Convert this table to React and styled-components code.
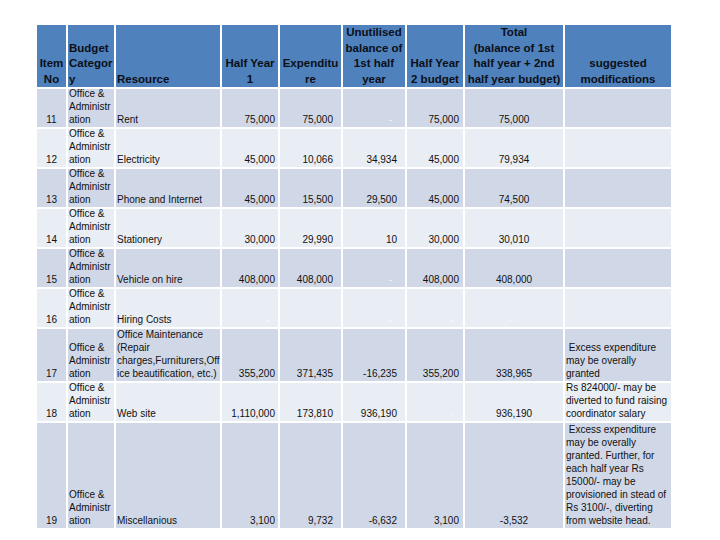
import styled, { createGlobalStyle } from "styled-components";

const GlobalStyle = createGlobalStyle`
  body {
    margin: 0;
    background: #ffffff;
    font-family: "Liberation Sans", Arial, sans-serif;
    color: #000000;
  }
`;

const Page = styled.div`
  padding: 25px 0 0 37px;
`;

const Sheet = styled.div`
  display: grid;
  grid-template-columns: 29px 46px 104px 56px 61px 62px 56px 98px 106px;
  grid-template-rows: 62px repeat(6, 38px) 52px 38px 105px;
  gap: 2px;
  width: max-content;
`;

const HeadCell = styled.div`
  background: #4f81bd;
  color: #0b0f17;
  display: flex;
  flex-direction: column;
  justify-content: flex-end;
  align-items: ${(p) => (p.$align === "left" ? "flex-start" : "center")};
  text-align: ${(p) => p.$align || "center"};
  padding: 0 1px;
  font-size: 11.5px;
  font-weight: 700;
  line-height: 15.5px;
  white-space: nowrap;
`;

const Cell = styled.div`
  background: ${(p) => (p.$dark ? "#d0d8e8" : "#e9edf4")};
  color: #111111;
  display: flex;
  flex-direction: column;
  justify-content: flex-end;
  align-items: ${(p) =>
    p.$align === "right"
      ? "flex-end"
      : p.$align === "center"
      ? "center"
      : "flex-start"};
  padding: 0 ${(p) => p.$padRight ?? 1}px 1px 1px;
  font-size: 10px;
  line-height: 13px;
  white-space: nowrap;
  overflow: visible;
`;

const Dash = styled.span`
  color: #f6f8fb;
  margin-right: 5px;
`;

const columns = [
  { key: "no", head: ["Item", "No"], headAlign: "center", align: "center" },
  { key: "cat", head: ["Budget", "Categor", "y"], headAlign: "left" },
  { key: "res", head: ["Resource"], headAlign: "left" },
  { key: "h1", head: ["Half Year", "1"], align: "right", pad: 3 },
  { key: "exp", head: ["Expenditu", "re"], align: "right", pad: 8 },
  {
    key: "un",
    head: ["Unutilised", "balance of", "1st half", "year"],
    align: "right",
    pad: 8,
  },
  { key: "h2", head: ["Half Year", "2 budget"], align: "right", pad: 4 },
  {
    key: "tot",
    head: ["Total", "(balance of 1st", "half year + 2nd", "half year budget)"],
    align: "center",
  },
  { key: "sug", head: ["suggested", "modifications"] },
];

const admin = ["Office &", "Administr", "ation"];

const rows = [
  { no: "11", res: ["Rent"], h1: "75,000", exp: "75,000", un: "-", h2: "75,000", tot: "75,000" },
  { no: "12", res: ["Electricity"], h1: "45,000", exp: "10,066", un: "34,934", h2: "45,000", tot: "79,934" },
  { no: "13", res: ["Phone and Internet"], h1: "45,000", exp: "15,500", un: "29,500", h2: "45,000", tot: "74,500" },
  { no: "14", res: ["Stationery"], h1: "30,000", exp: "29,990", un: "10", h2: "30,000", tot: "30,010" },
  { no: "15", res: ["Vehicle on hire"], h1: "408,000", exp: "408,000", un: "-", h2: "408,000", tot: "408,000" },
  { no: "16", res: ["Hiring Costs"], h1: "-", exp: "", un: "-", h2: "-", tot: "-" },
  {
    no: "17",
    res: [
      "Office Maintenance",
      "(Repair",
      "charges,Furniturers,Off",
      "ice beautification, etc.)",
    ],
    h1: "355,200",
    exp: "371,435",
    un: "-16,235",
    h2: "355,200",
    tot: "338,965",
    sug: [" Excess expenditure", "may be overally", "granted"],
  },
  {
    no: "18",
    res: ["Web site"],
    h1: "1,110,000",
    exp: "173,810",
    un: "936,190",
    h2: "-",
    tot: "936,190",
    sug: ["Rs 824000/- may be", "diverted to fund raising", "coordinator salary"],
  },
  {
    no: "19",
    res: ["Miscellanious"],
    h1: "3,100",
    exp: "9,732",
    un: "-6,632",
    h2: "3,100",
    tot: "-3,532",
    sug: [
      " Excess expenditure",
      "may be overally",
      "granted. Further, for",
      "each half year Rs",
      "15000/- may be",
      "provisioned in stead of",
      "Rs 3100/-, diverting",
      "from website head.",
    ],
  },
];

const Lines = ({ lines }) =>
  lines.map((line, i) => <span key={i}>{line.replace(/^ /, "\u00a0")}</span>);

const renderValue = (row, col) => {
  if (col.key === "cat") return <Lines lines={admin} />;
  const value = row[col.key];
  if (!value) return null;
  if (Array.isArray(value)) return <Lines lines={value} />;
  if (value === "-") return <Dash>-</Dash>;
  return <span>{value}</span>;
};

const App = () => (
  <>
    <GlobalStyle />
    <Page>
      <Sheet>
        {columns.map((col) => (
          <HeadCell key={col.key} $align={col.headAlign}>
            <Lines lines={col.head} />
          </HeadCell>
        ))}
        {rows.map((row, r) =>
          columns.map((col) => (
            <Cell
              key={`${row.no}-${col.key}`}
              $dark={r % 2 === 0}
              $align={col.align}
              $padRight={col.pad}
            >
              {renderValue(row, col)}
            </Cell>
          ))
        )}
      </Sheet>
    </Page>
  </>
);

export default App;
